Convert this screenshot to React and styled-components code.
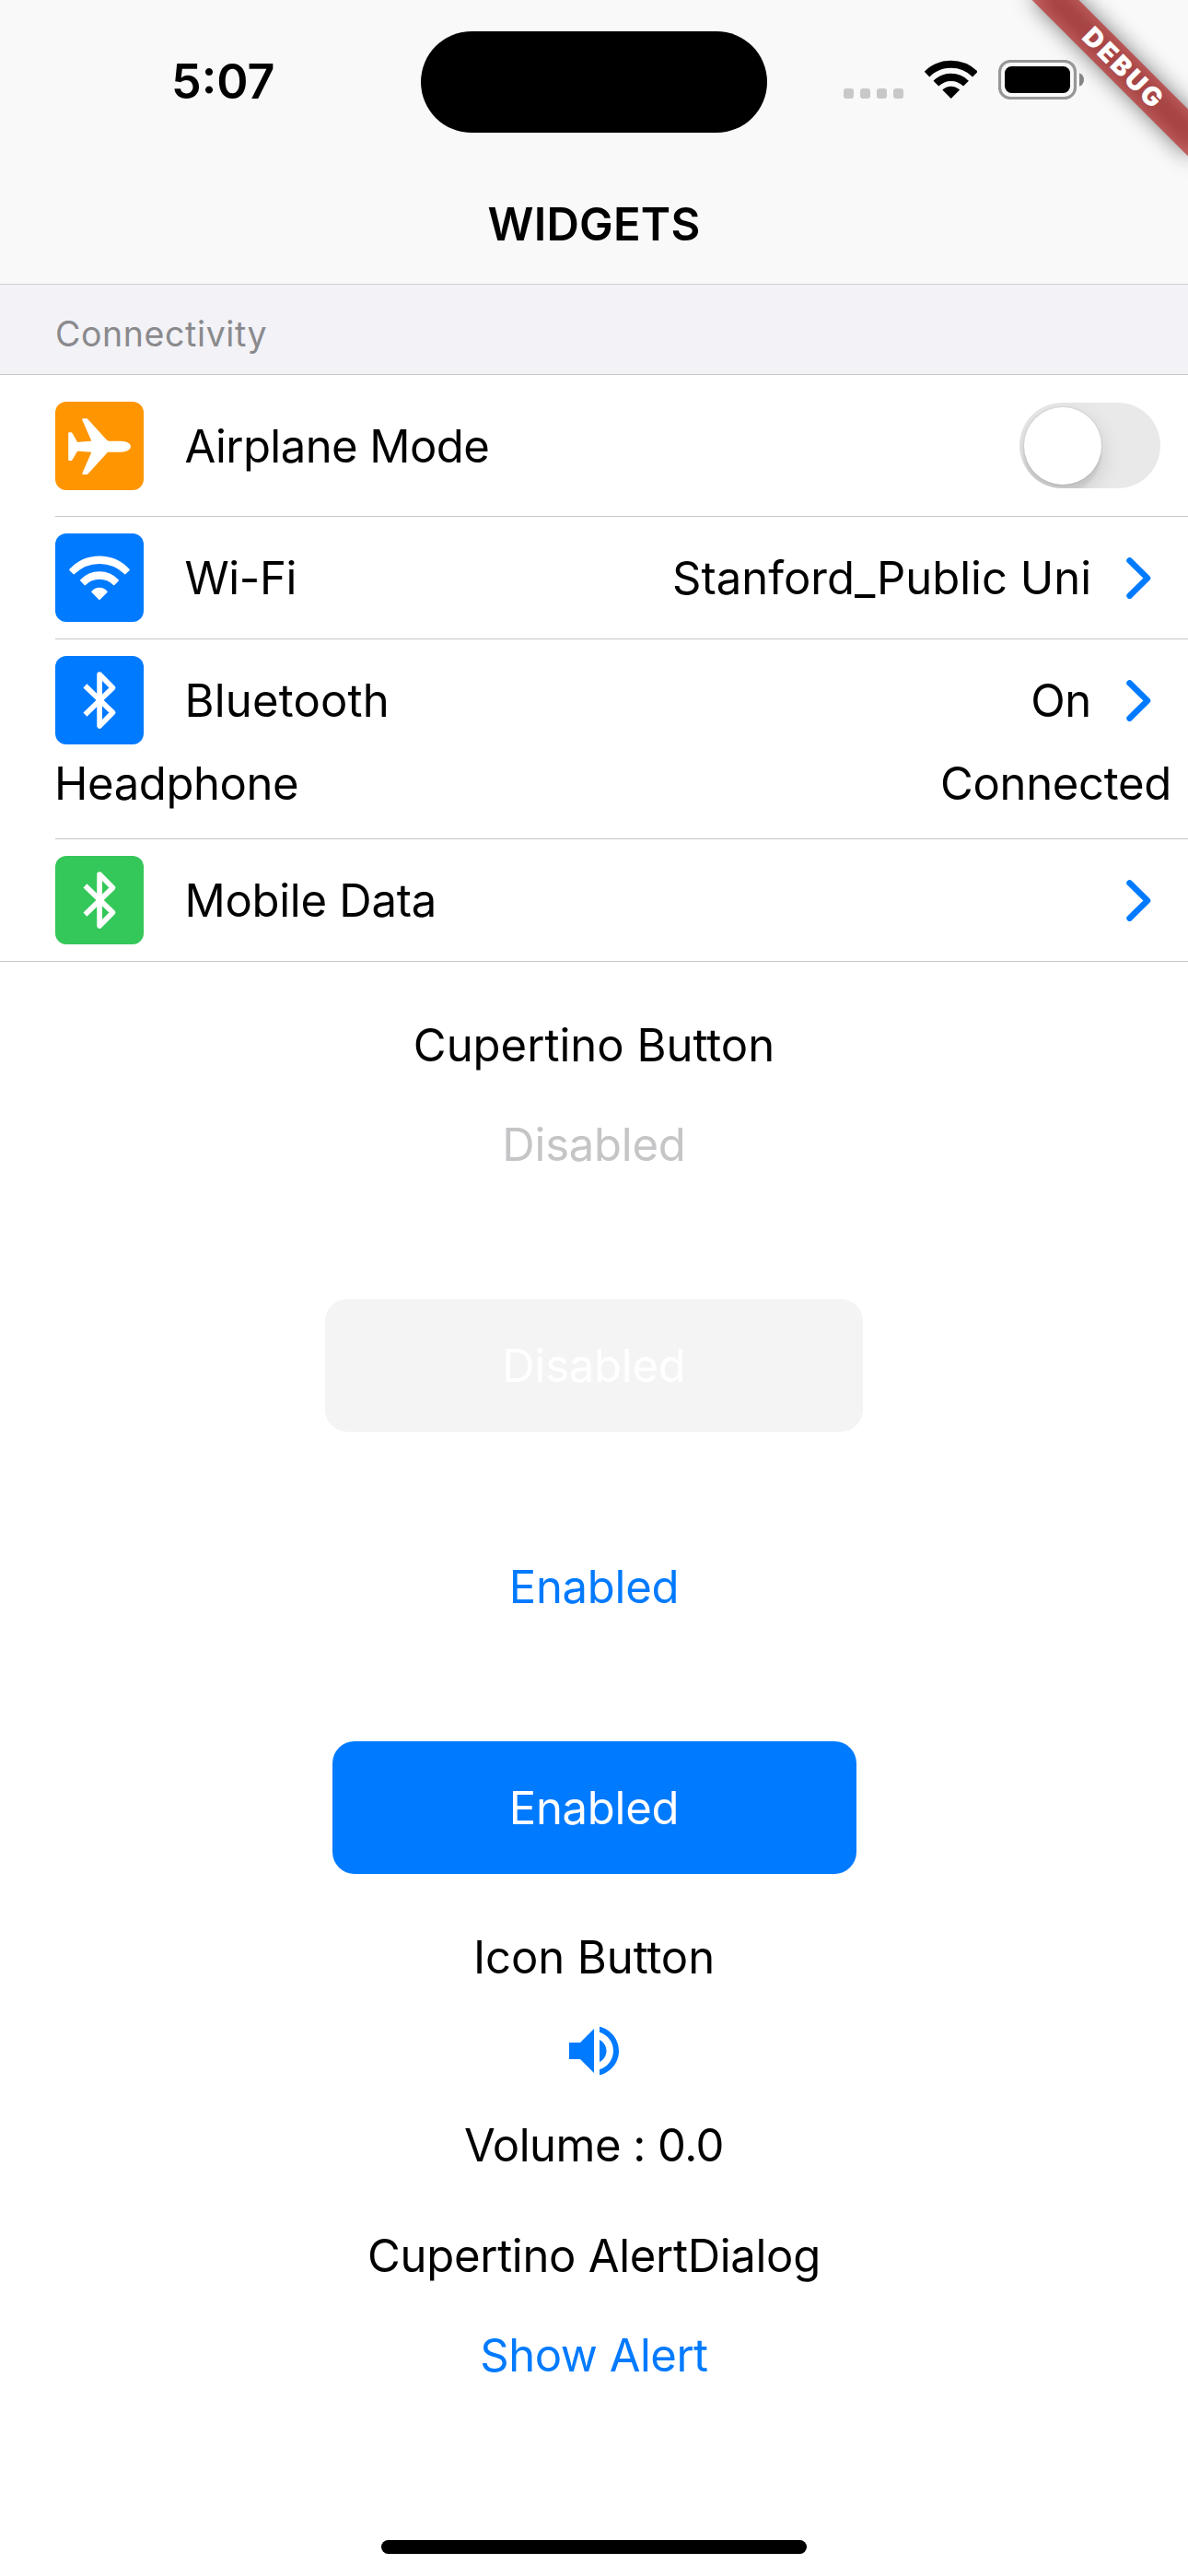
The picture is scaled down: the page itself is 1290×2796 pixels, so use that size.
import React, { useState } from "react";
import styled, { createGlobalStyle } from "styled-components";

const colors = {
  blue: "#007aff",
  orange: "#ff9500",
  green: "#34c759",
  bar: "#f9f9f9",
  section: "#f2f2f7",
  line: "#c6c6c8",
  secondary: "#8a8a8d",
};

const GlobalStyle = createGlobalStyle`
  html, body { margin: 0; padding: 0; background: #fff; }
  body { font-family: Inter, "Liberation Sans", sans-serif; color: #000; }
  button { font: inherit; color: inherit; border: 0; background: none; padding: 0; }
`;

const Screen = styled.div`
  width: 1290px;
  height: 2796px;
  box-sizing: border-box;
  display: flex;
  flex-direction: column;
  position: relative;
  overflow: hidden;
  background: #fff;
`;

/* Header */

const Header = styled.header`
  background: ${colors.bar};
  display: flex;
  flex-direction: column;
`;

const StatusBar = styled.div`
  height: 177px;
  box-sizing: border-box;
  padding-left: 186px;
  display: flex;
  align-items: flex-start;
  position: relative;
  z-index: 2;
`;

const Time = styled.div`
  width: 271px;
  margin-top: 57px;
  font-size: 52px;
  line-height: 63px;
  font-weight: 600;
`;

const Island = styled.div`
  width: 376px;
  height: 110px;
  margin-top: 34px;
  border-radius: 55px;
  background: #000;
`;

const Indicators = styled.div`
  height: 43px;
  margin: 65px 0 0 83px;
  display: flex;
  align-items: flex-end;
  gap: 23px;

  svg { display: block; }
`;

const Cellular = styled.div`
  display: flex;
  gap: 7px;
`;

const Dot = styled.i`
  width: 11px;
  height: 11px;
  margin-bottom: 1px;
  border-radius: 3px;
  background: #c8c8c8;
`;

const NavBar = styled.div`
  height: 132px;
  box-sizing: border-box;
  padding-top: 2px;
  border-bottom: 1px solid #cfcfd0;
  display: flex;
  align-items: center;
  justify-content: center;
`;

const Title = styled.h1`
  margin: 0;
  font-size: 49px;
  line-height: 61px;
  font-weight: 600;
  letter-spacing: 0.2px;
`;

const BannerCorner = styled.div`
  position: absolute;
  top: 0;
  right: 0;
  width: 280px;
  height: 280px;
  overflow: hidden;
  z-index: 1;
`;

const Banner = styled.div`
  position: absolute;
  left: 88px;
  top: 54px;
  width: 240px;
  height: 36px;
  transform: rotate(45deg);

  &::before {
    content: "";
    position: absolute;
    inset: 0;
    background: rgba(0, 0, 0, 0.5);
    filter: blur(11.9px);
  }
`;

const BannerLabel = styled.div`
  position: relative;
  height: 36px;
  box-sizing: border-box;
  padding-left: 6px;
  background: rgba(183, 28, 28, 0.63);
  color: #fff;
  font-size: 28.5px;
  line-height: 36px;
  font-weight: 900;
  letter-spacing: 2.6px;
  text-align: center;
`;

/* Settings list */

const SectionTitle = styled.h2`
  height: 98px;
  margin: 0;
  box-sizing: border-box;
  padding: 10px 60px 0;
  border-bottom: 1px solid ${colors.line};
  background: ${colors.section};
  color: ${colors.secondary};
  font-size: 37.5px;
  line-height: 87px;
  font-weight: 400;
  letter-spacing: 0.6px;
`;

const List = styled.div`
  display: flex;
  flex-direction: column;
  border-bottom: 1px solid ${colors.line};
`;

const Divider = styled.hr`
  width: 1230px;
  height: 1px;
  margin: 0 0 0 60px;
  border: 0;
  background: ${colors.line};
`;

const Row = styled.div`
  height: ${(p) => (p.$tall ? 153 : 132)}px;
  box-sizing: border-box;
  padding: 0 ${(p) => (p.$tall ? 30 : 40)}px 0 60px;
  display: flex;
  align-items: center;
`;

const SubRow = styled.div`
  height: 84px;
  box-sizing: border-box;
  padding: 0 18px 36px 59px;
  display: flex;
  align-items: center;
  justify-content: space-between;
`;

const Text = styled.span`
  padding-top: 1px;
  font-size: 49px;
  line-height: 61px;
  white-space: pre;
  letter-spacing: ${(p) => p.$tracking || 0}px;
`;

const IconBox = styled.div`
  width: 96px;
  height: 96px;
  margin-right: 44.4px;
  flex: none;
  border-radius: 12px;
  background: ${(p) => p.$color};

  svg { display: block; }
`;

const Trailing = styled.div`
  margin-left: auto;
  display: flex;
  align-items: center;
  gap: 38px;
`;

const Switch = styled.button`
  width: 153px;
  height: 93px;
  box-sizing: border-box;
  padding: 4.5px;
  border-radius: 46.5px;
  background: #e9e9ea;
  overflow: hidden;
  display: flex;
  justify-content: ${(p) => (p.$on ? "flex-end" : "flex-start")};
`;

const Thumb = styled.span`
  width: 84px;
  height: 84px;
  border-radius: 50%;
  background: #fff;
  box-shadow: 0 0 0 1.5px rgba(0, 0, 0, 0.04), 0 9px 24px rgba(0, 0, 0, 0.15),
    0 9px 3px rgba(0, 0, 0, 0.06);
`;

/* Widgets */

const Content = styled.main`
  padding-top: 60px;
  display: flex;
  flex-direction: column;
  align-items: center;
`;

const Heading = styled.h3`
  margin: ${(p) => p.$top || 0}px 0 ${(p) => p.$bottom || 0}px;
  font-size: 49px;
  line-height: 61px;
  font-weight: 400;
  white-space: pre;
  letter-spacing: ${(p) => p.$tracking || 0}px;
`;

const ButtonStack = styled.div`
  display: flex;
  flex-direction: column;
  align-items: center;
  gap: 96px;
`;

const Button = styled.button`
  width: ${(p) => (p.$width ? `${p.$width}px` : "auto")};
  height: 144px;
  border-radius: 24px;
  display: flex;
  align-items: center;
  justify-content: center;
  background: ${(p) => p.$fill || "transparent"};
  color: ${(p) => p.$color || colors.blue};
`;

const IconButton = styled.button`
  width: 132px;
  height: 132px;
  display: flex;
  align-items: center;
  justify-content: center;

  svg { display: block; }
`;

const HomeIndicator = styled.div`
  width: 462px;
  height: 15px;
  margin: auto auto 24px;
  border-radius: 8px;
  background: #000;
`;

/* Icons */

const StatusWifi = () => (
  <svg width="57" height="43" viewBox="0 0 57 43">
    <g fill="none" stroke="#000">
      <path d="M2.5 15.6A37 37 0 0 1 54.9 15.6" strokeWidth="8" />
      <path d="M12.4 25.6A23 23 0 0 1 45 25.6" strokeWidth="8.2" />
    </g>
    <path d="M28.7 41.9L19.3 32.6A13.3 13.3 0 0 1 38.1 32.6Z" />
  </svg>
);

const Battery = () => (
  <svg width="94" height="43" viewBox="0 0 94 43">
    <rect x="1.5" y="1.5" width="82" height="40" rx="11.5" fill="none" stroke="#979797" strokeWidth="3.2" />
    <rect x="7" y="7" width="71" height="29" rx="7.5" />
    <path d="M88 14.2C91.3 15.3 93 18.3 93 21.4S91.3 27.7 88 28.7Z" fill="#858585" />
  </svg>
);

const AirplaneIcon = () => (
  <svg width="96" height="96" viewBox="0 0 96 96">
    <path
      fill="#fff"
      stroke="#fff"
      strokeWidth="2"
      strokeLinejoin="round"
      d="M57.4 43.7H71.5C77 43.7 81 46 81 48.7S77 53.7 71.5 53.7H57.4C56 54.3 55 55.5 54 56.6L34.4 78.1H30.2L40.8 53.9 23.6 52.4 17.4 63.1H15.2V34.3H17.4L23.6 45 40.8 43.5 30.2 19.3H34.4L54 40.8C55 41.9 56 43.1 57.4 43.7Z"
    />
  </svg>
);

const WifiIcon = () => (
  <svg width="96" height="96" viewBox="0 0 96 96">
    <g fill="#fff" stroke="#fff" strokeWidth="2" strokeLinejoin="round">
      <path d="M16.2 39.5A43 43 0 0 1 79.8 39.5L75.8 43.4A39.5 39.5 0 0 0 20.2 43.4Z" />
      <path d="M28 50.9A27.5 27.5 0 0 1 68 50.9L63.7 55.4A22 22 0 0 0 32.3 55.4Z" />
      <path d="M40.3 63.4A10 10 0 0 1 55.7 63.4L48 71Z" />
    </g>
  </svg>
);

const BluetoothIcon = () => (
  <svg width="96" height="96" viewBox="0 0 96 96">
    <path
      fill="none"
      stroke="#fff"
      strokeWidth="5.7"
      strokeLinejoin="round"
      d="M32.4 32.4L62.4 61.4 48.1 75.9V20.1L62.4 34.6 32.4 63.6"
    />
  </svg>
);

const Chevron = () => (
  <svg width="27" height="45" viewBox="0 0 27 45">
    <path
      fill="none"
      stroke={colors.blue}
      strokeWidth="6.6"
      strokeLinecap="round"
      strokeLinejoin="round"
      d="M3.6 3.4L23 22.5 3.6 41.6"
    />
  </svg>
);

const VolumeIcon = () => (
  <svg width="72" height="72" viewBox="0 0 24 24" fill={colors.blue}>
    <path d="M3 9v6h4l5 5V4L7 9H3zm13.5 3c0-1.77-1.02-3.29-2.5-4.03v8.05c1.48-.73 2.5-2.25 2.5-4.02zM14 3.23v2.06c2.89.86 5 3.54 5 6.71s-2.11 5.85-5 6.71v2.06c4.01-.91 7-4.49 7-8.77s-2.99-7.86-7-8.77z" />
  </svg>
);

export default function App() {
  const [airplane, setAirplane] = useState(false);

  return (
    <Screen>
      <GlobalStyle />
      <Header>
        <StatusBar>
          <Time>5:07</Time>
          <Island />
          <Indicators>
            <Cellular>
              <Dot />
              <Dot />
              <Dot />
              <Dot />
            </Cellular>
            <StatusWifi />
            <Battery />
          </Indicators>
        </StatusBar>
        <NavBar>
          <Title>WIDGETS</Title>
        </NavBar>
      </Header>

      <BannerCorner>
        <Banner>
          <BannerLabel>DEBUG</BannerLabel>
        </Banner>
      </BannerCorner>

      <SectionTitle>Connectivity</SectionTitle>
      <List>
        <Row $tall>
          <IconBox $color={colors.orange}>
            <AirplaneIcon />
          </IconBox>
          <Text $tracking={-0.55}>Airplane Mode</Text>
          <Trailing>
            <Switch $on={airplane} onClick={() => setAirplane(!airplane)}>
              <Thumb />
            </Switch>
          </Trailing>
        </Row>
        <Divider />
        <Row>
          <IconBox $color={colors.blue}>
            <WifiIcon />
          </IconBox>
          <Text $tracking={-0.4}>Wi-Fi</Text>
          <Trailing>
            <Text>Stanford_Public Uni</Text>
            <Chevron />
          </Trailing>
        </Row>
        <Divider />
        <Row>
          <IconBox $color={colors.blue}>
            <BluetoothIcon />
          </IconBox>
          <Text $tracking={0.2}>Bluetooth</Text>
          <Trailing>
            <Text $tracking={-0.3}>On</Text>
            <Chevron />
          </Trailing>
        </Row>
        <SubRow>
          <Text $tracking={-0.4}>Headphone</Text>
          <Text $tracking={-0.3}>Connected</Text>
        </SubRow>
        <Divider />
        <Row>
          <IconBox $color={colors.green}>
            <BluetoothIcon />
          </IconBox>
          <Text $tracking={-0.26}>Mobile Data</Text>
          <Trailing>
            <Chevron />
          </Trailing>
        </Row>
      </List>

      <Content>
        <Heading $bottom={5}>Cupertino Button</Heading>
        <ButtonStack>
          <Button $color="#c5c5c7">
            <Text $tracking={-0.22}>Disabled</Text>
          </Button>
          <Button $width={584} $fill="#f4f4f4" $color="#fff">
            <Text $tracking={-0.22}>Disabled</Text>
          </Button>
          <Button>
            <Text $tracking={-0.26}>Enabled</Text>
          </Button>
          <Button $width={569} $fill={colors.blue} $color="#fff">
            <Text $tracking={-0.26}>Enabled</Text>
          </Button>
        </ButtonStack>
        <Heading $top={60} $bottom={5} $tracking={-0.09}>Icon Button</Heading>
        <IconButton>
          <VolumeIcon />
        </IconButton>
        <Heading $top={6} $tracking={-0.51}>Volume : 0.0</Heading>
        <Heading $top={59} $bottom={5} $tracking={-0.3}>Cupertino AlertDialog</Heading>
        <Button>
          <Text $tracking={-0.5}>Show Alert</Text>
        </Button>
      </Content>

      <HomeIndicator />
    </Screen>
  );
}
